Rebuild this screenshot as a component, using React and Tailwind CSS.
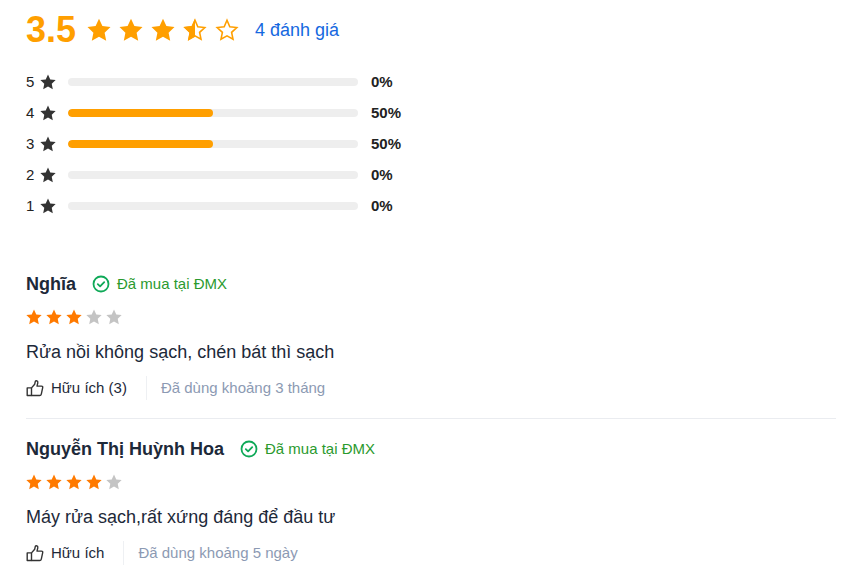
import React from 'react';

const STAR =
  'M12 .7l3.4 7.4 8.1 1-5.9 5.6 1.6 8.1-7.2-4-7.2 4 1.6-8.1L.5 9.1l8.1-1z';

const ratings = [
  { star: 5, percent: 0 },
  { star: 4, percent: 50 },
  { star: 3, percent: 50 },
  { star: 2, percent: 0 },
  { star: 1, percent: 0 },
];

const reviews = [
  {
    id: 1,
    name: 'Nghĩa',
    stars: 3,
    content: 'Rửa nồi không sạch, chén bát thì sạch',
    useful: 'Hữu ích (3)',
    used: 'Đã dùng khoảng 3 tháng',
  },
  {
    id: 2,
    name: 'Nguyễn Thị Huỳnh Hoa',
    stars: 4,
    content: 'Máy rửa sạch,rất xứng đáng để đầu tư',
    useful: 'Hữu ích',
    used: 'Đã dùng khoảng 5 ngày',
  },
];

const Star = ({ className }) => (
  <svg
    viewBox="0 0 24 24"
    fill="currentColor"
    className={className}
    aria-hidden="true"
  >
    <path d={STAR} />
  </svg>
);

const OutlineStar = ({ half }) => (
  <svg viewBox="0 0 24 24" className="size-6" aria-hidden="true">
    <path
      d="M12 2.3l2.8 6.4 7 .8-5.2 4.9 1.4 6.8-6-3.4-6 3.4 1.4-6.8-5.2-4.9 7-.8z"
      fill="none"
      stroke="currentColor"
      strokeWidth="1.6"
    />
    {half && (
      <path
        d="M12 .7v18.1l-7.2 4 1.6-8.1L.5 9.1l8.1-1z"
        fill="currentColor"
      />
    )}
  </svg>
);

const CheckIcon = () => (
  <svg
    viewBox="0 0 18 18"
    fill="none"
    stroke="currentColor"
    strokeWidth="1.8"
    strokeLinecap="round"
    strokeLinejoin="round"
    className="size-[18px] text-[#0fa958]"
    aria-hidden="true"
  >
    <circle cx="9" cy="9" r="7.5" />
    <path d="M5.8 9.2l2.3 2.2 4.1-4.3" />
  </svg>
);

const LikeIcon = () => (
  <svg
    viewBox="0 0 18 18"
    fill="none"
    stroke="currentColor"
    strokeWidth="1.4"
    strokeLinejoin="round"
    className="size-[18px] text-[#333]"
    aria-hidden="true"
  >
    <path d="M1.2 8.9h4.3v7.6H1.2z" />
    <path d="M5.5 8.9l3.2-3.7.5-2.3c.2-1 .8-1.3 1.4-1.1.9.2 1.4 1 1.2 2l-.8 3.3h4.5c.9 0 1.4.7 1.2 1.5l-1.4 6.5c-.2.9-.8 1.4-1.6 1.4H5.5" />
  </svg>
);

const ReviewItem = ({ review }) => (
  <li className="border-b border-[#eaecf0] py-[18px] first:pt-0 last:border-b-0">
    <div className="flex items-center">
      <h3 className="text-[18px] leading-6 font-bold text-[#1d2939]">
        {review.name}
      </h3>
      <span className="ml-4 flex items-center gap-[7px] text-[15px] leading-6 text-[#2b9a2e]">
        <CheckIcon />
        Đã mua tại ĐMX
      </span>
    </div>
    <div
      className="mt-[13px] flex gap-1"
      role="img"
      aria-label={`${review.stars}/5`}
    >
      {[1, 2, 3, 4, 5].map((n) => (
        <Star
          key={n}
          className={
            n <= review.stars ? 'size-4 text-[#ff7a00]' : 'size-4 text-[#c4c4c4]'
          }
        />
      ))}
    </div>
    <p className="mt-[15px] text-[18px] leading-6 text-[#1d2939]">
      {review.content}
    </p>
    <div className="mt-3 flex items-center text-[15px] leading-6">
      <button
        type="button"
        className="flex items-center gap-[7px] text-[#1d2939]"
      >
        <LikeIcon />
        {review.useful}
      </button>
      <span className="ml-[19px] border-l border-[#eef0f3] pl-[14px] text-[#8c9ab3]">
        {review.used}
      </span>
    </div>
  </li>
);

const App = () => {
  return (
    <main className="bg-white pt-[10px] pr-[22px] pl-[26px] font-['Liberation_Sans',Arial,sans-serif]">
      <div className="flex h-10 items-center text-[#ff9f00]">
        <span className="text-[36px] leading-10 font-bold">3.5</span>
        <div
          className="ml-[11px] flex gap-2"
          role="img"
          aria-label="3.5/5"
        >
          <Star className="size-6" />
          <Star className="size-6" />
          <Star className="size-6" />
          <OutlineStar half />
          <OutlineStar />
        </div>
        <a
          href="#reviews"
          className="ml-4 text-[18px] leading-6 text-[#1568e0]"
        >
          4 đánh giá
        </a>
      </div>

      <ul className="mt-[22px] flex flex-col gap-[11px] text-[15px] leading-5 text-[#222]">
        {ratings.map(({ star, percent }) => (
          <li key={star} className="flex items-center">
            <span className="w-[14px]">{star}</span>
            <Star className="size-4 text-[#333]" />
            <div className="ml-3 h-2 w-[290px] overflow-hidden rounded-full bg-[#eee]">
              <div
                className="h-full rounded-full bg-[#ff9f00]"
                style={{ width: `${percent}%` }}
              />
            </div>
            <strong className="ml-[13px]">{percent}%</strong>
          </li>
        ))}
      </ul>

      <ul id="reviews" className="mt-14">
        {reviews.map((review) => (
          <ReviewItem key={review.id} review={review} />
        ))}
      </ul>
    </main>
  );
};

export default App;
